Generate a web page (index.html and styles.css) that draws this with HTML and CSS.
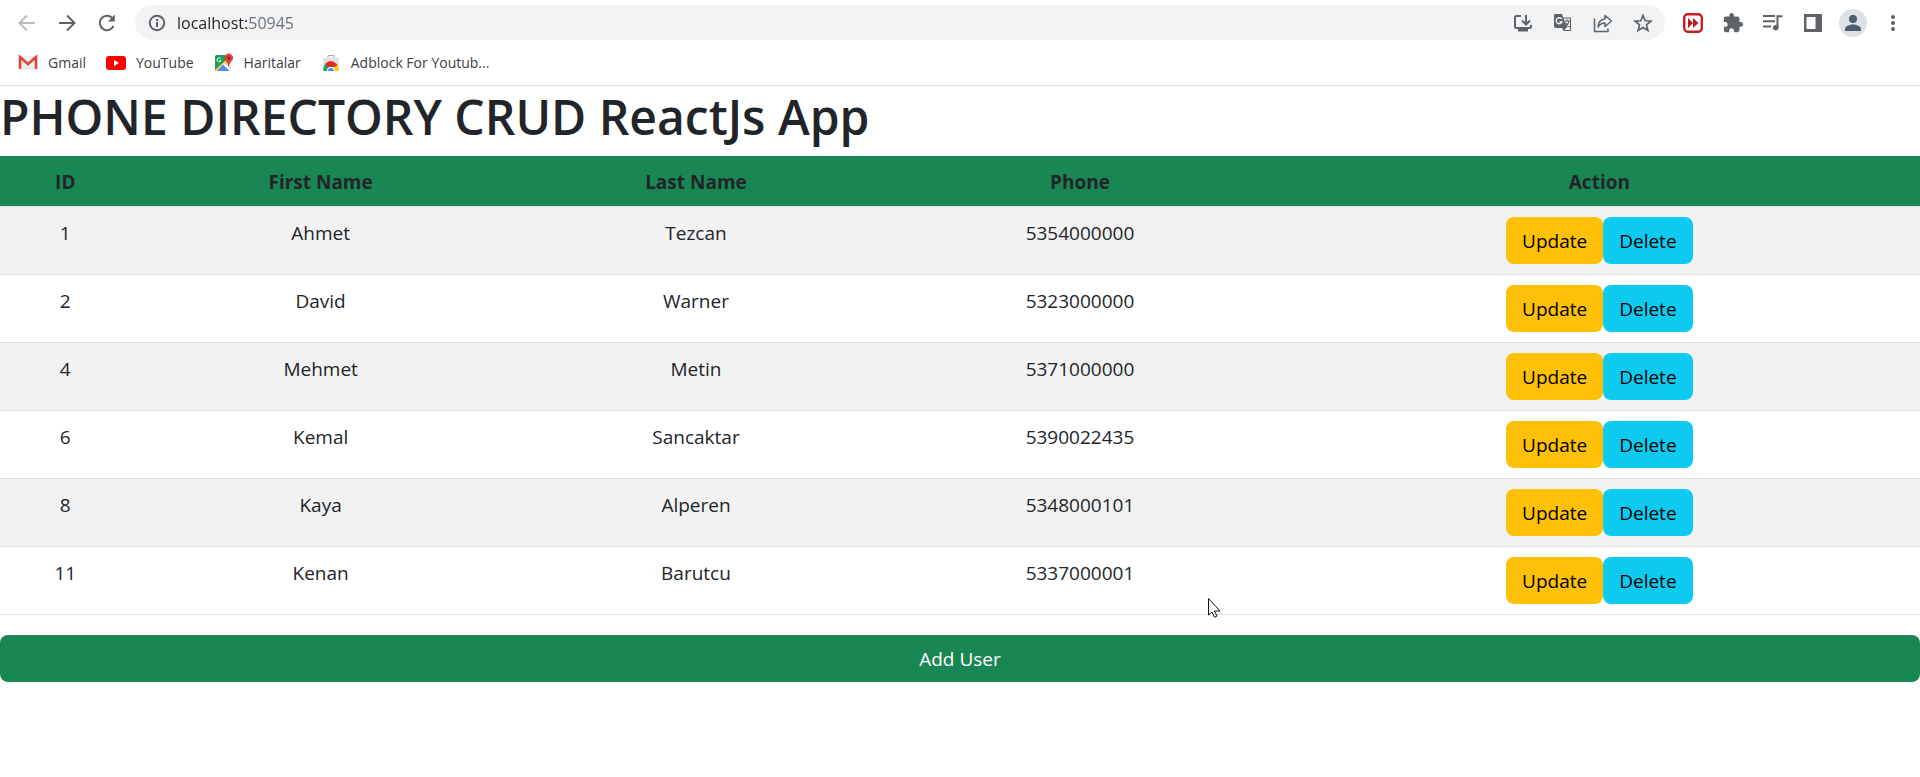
FILE: index.html
```html
<!DOCTYPE html>
<html lang="en">
<head>
<meta charset="utf-8">
<meta name="viewport" content="width=device-width, initial-scale=1">
<title>Phone Directory</title>
<link rel="stylesheet" href="styles.css">
</head>
<body>
<header class="browser">
  <div class="toolbar">
    <div class="tool-group">
      <button class="tool tool-muted" aria-label="Back"><svg width="20" height="20" viewBox="0 0 20 20" fill="none" stroke="currentColor" stroke-width="2"><path d="M18 10H3M10 2.500L2.500 10l7.500 7.500"/></svg></button>
      <button class="tool" aria-label="Forward"><svg width="20" height="20" viewBox="0 0 20 20" fill="none" stroke="currentColor" stroke-width="2"><path d="M2 10h15M10 2.500l7.500 7.500-7.500 7.500"/></svg></button>
      <button class="tool" aria-label="Reload"><svg width="20" height="20" viewBox="0 0 20 20"><path d="M16.500 13A7.200 7.200 0 1 1 15 4.800" fill="none" stroke="currentColor" stroke-width="2"/><path d="M17.800 1.500V8.500H10.800z" fill="currentColor"/></svg></button>
    </div>
    <div class="address">
      <svg width="20" height="20" viewBox="0 0 20 20" fill="none" stroke="currentColor" stroke-width="2"><circle cx="10" cy="10" r="7.200"/><path d="M10 9v5M10 6v2"/></svg>
      <input class="url" type="text" value="localhost:50945" aria-label="Address">
      <div class="tool-group">
        <button class="tool" aria-label="Install"><svg width="20" height="20" viewBox="0 0 20 20" fill="none" stroke="currentColor" stroke-width="2"><path d="M8 3H3.500Q2 3 2 4.500V13.500Q2 15 3.500 15H16.500Q18 15 18 13.500V12"/><path d="M13 2v9M9 7.500l4 4 4-4"/><path d="M5 17h10" stroke-width="3"/></svg></button>
        <button class="tool" aria-label="Translate"><svg width="20" height="20" viewBox="0 0 20 20"><path d="M9 5h8.500v12.500H11" fill="none" stroke="currentColor"/><path d="M2 1h7l5 14H3.200Q1 15 1 13V2.200Q1 1 2 1z" fill="currentColor"/><path d="M9 15h4l-2.500 3z" fill="currentColor"/><path d="M8.800 6.200A3 3 0 1 0 9 9H6.500" fill="none" stroke="#f1f3f4" stroke-width="1.400"/><path d="M11.500 8h5.500M14 6.500V8M16 8q-1 4-3.500 5.500M12.500 9.500q1 3 4 4.500" fill="none" stroke="currentColor" stroke-width="1.200"/></svg></button>
        <button class="tool" aria-label="Share"><svg width="20" height="20" viewBox="0 0 20 20" fill="none" stroke="currentColor" stroke-width="1.500"><path d="M1.500 5.500v13h13.500v-3"/><path d="M12 2.500l6.500 5.500-6.500 5.500v-3.500Q7.500 10 5 14 5.500 6.500 12 6z" stroke-linejoin="round"/></svg></button>
        <button class="tool" aria-label="Bookmark"><svg width="20" height="20" viewBox="0 0 20 20" fill="none" stroke="currentColor" stroke-width="1.700"><path d="M10 2.500l2.200 5.300 5.700.4-4.400 3.700 1.400 5.600L10 14.500l-4.900 3 1.400-5.600L2.100 8.200l5.700-.4z"/></svg></button>
      </div>
    </div>
    <div class="tool-group">
      <button class="tool" aria-label="Fast forward extension"><svg width="20" height="20" viewBox="0 0 20 20"><rect x="1.200" y="1.200" width="17.600" height="17.600" rx="3.500" fill="#fff" stroke="#c4201f" stroke-width="2.400"/><path d="M5 5l5 5-5 5zM10 5l5.500 5-5.500 5z" fill="#b8201f"/></svg></button>
      <button class="tool" aria-label="Extensions"><svg width="22" height="22" viewBox="0 0 24 24" fill="currentColor"><path d="M20.500 11H19V7c0-1.100-.9-2-2-2h-4V3.500a2.500 2.500 0 0 0-5 0V5H4c-1.100 0-2 .9-2 2v3.800h1.500c1.500 0 2.700 1.200 2.700 2.700S5 16.200 3.500 16.200H2V20c0 1.100.9 2 2 2h3.800v-1.500c0-1.500 1.200-2.700 2.700-2.700s2.700 1.200 2.700 2.700V22H17c1.100 0 2-.9 2-2v-4h1.500a2.500 2.500 0 0 0 0-5z"/></svg></button>
      <button class="tool" aria-label="Media control"><svg width="22" height="20" viewBox="0 0 22 20" fill="none" stroke="currentColor" stroke-width="2"><path d="M1 3h12M1 8.300h12M1 13.500h8"/><path d="M15.500 15V3.200H20.500"/><circle cx="13.700" cy="14.700" r="2.700" fill="currentColor" stroke="none"/></svg></button>
      <button class="tool" aria-label="Side panel"><svg width="20" height="20" viewBox="0 0 20 20"><path d="M1 1h18v18H1z" fill="currentColor"/><path d="M3.500 4h9v12h-9z" fill="#fff"/></svg></button>
      <button class="tool" aria-label="Profile"><svg width="28" height="28" viewBox="0 0 28 28"><circle cx="14" cy="14" r="14" fill="#dee1e6"/><circle cx="14" cy="10" r="4" fill="#4f5b71"/><path d="M6 22v-2c0-3 5-4.500 8-4.500s8 1.500 8 4.500v2z" fill="#4f5b71"/></svg></button>
      <button class="tool" aria-label="Menu"><svg width="20" height="20" viewBox="0 0 20 20" fill="currentColor"><circle cx="10" cy="4" r="2"/><circle cx="10" cy="10" r="2"/><circle cx="10" cy="16" r="2"/></svg></button>
    </div>
  </div>
  <nav class="bookmarks" aria-label="Bookmarks">
    <a class="bookmark" href="#gmail"><svg width="20" height="20" viewBox="0 0 20 20"><path d="M2 3h16v14H2z" fill="#eee"/><path d="M2 16V4l8 7 8-7v12" fill="none" stroke="#d9483b" stroke-width="2.600"/></svg>Gmail</a>
    <a class="bookmark" href="#youtube"><svg width="20" height="20" viewBox="0 0 20 20"><rect y="3" width="20" height="14" rx="3" fill="#f00"/><path d="M8 7l5 3-5 3z" fill="#fff"/></svg>YouTube</a>
    <a class="bookmark" href="#maps"><svg width="20" height="20" viewBox="0 0 20 20"><path d="M2.500 2H11L13 10 3 18H1V3.500Q1 2 2.500 2z" fill="#1e9e58"/><path d="M13 8l4 4v6L9 11z" fill="#dfe2e4"/><path d="M1 17L13 6l1 3L4 18H1z" fill="#ffd04b"/><path d="M9 11.500L16 18H3z" fill="#4c8df6"/><path d="M9.500 11l7.500 7" stroke="#fff" stroke-width="1.400"/><path d="M6.500 5.500A2 2 0 1 0 7 7.500H5.500" fill="none" stroke="#fff"/><path d="M14.500 14Q14 10.500 11.500 7.500A4.200 4.200 0 1 1 18 7.500Q15.500 10.500 14.500 14z" fill="#dc4437"/><circle cx="14.800" cy="5" r="1.500" fill="#7b231e"/></svg>Haritalar</a>
    <a class="bookmark" href="#adblock"><svg width="20" height="20" viewBox="0 0 20 20"><path d="M7 5V2.500h6V5" fill="none" stroke="#aaa"/><path d="M2 5h16l-1 13H3z" fill="#e2e2e2"/><path d="M2.500 18a7.500 8 0 0 1 3-8l4.500 8z" fill="#24a45a"/><path d="M10 13l7-1.500q1 3 .5 6.500H10z" fill="#fbcb09"/><path d="M4 11q6-6.500 12.500 1l-3 2H7z" fill="#df2f2c"/><path d="M6 18a4 4 0 0 1 8 0z" fill="#fff"/><path d="M7 18a3 3 0 0 1 6 0z" fill="#4c8df6"/></svg>Adblock For Youtub...</a>
  </nav>
</header>
<main>
  <h1 class="title">PHONE DIRECTORY CRUD ReactJs App</h1>
  <table class="directory">
    <colgroup><col class="col-id"><col class="col-first"><col class="col-last"><col class="col-phone"><col class="col-action"></colgroup>
    <thead>
      <tr><th scope="col">ID</th><th scope="col">First Name</th><th scope="col">Last Name</th><th scope="col">Phone</th><th scope="col">Action</th></tr>
    </thead>
    <tbody>
      <tr><td>1</td><td>Ahmet</td><td>Tezcan</td><td>5354000000</td><td class="cell-actions"><div class="actions"><button class="btn btn-update">Update</button><button class="btn btn-delete">Delete</button></div></td></tr>
      <tr><td>2</td><td>David</td><td>Warner</td><td>5323000000</td><td class="cell-actions"><div class="actions"><button class="btn btn-update">Update</button><button class="btn btn-delete">Delete</button></div></td></tr>
      <tr><td>4</td><td>Mehmet</td><td>Metin</td><td>5371000000</td><td class="cell-actions"><div class="actions"><button class="btn btn-update">Update</button><button class="btn btn-delete">Delete</button></div></td></tr>
      <tr><td>6</td><td>Kemal</td><td>Sancaktar</td><td>5390022435</td><td class="cell-actions"><div class="actions"><button class="btn btn-update">Update</button><button class="btn btn-delete">Delete</button></div></td></tr>
      <tr><td>8</td><td>Kaya</td><td>Alperen</td><td>5348000101</td><td class="cell-actions"><div class="actions"><button class="btn btn-update">Update</button><button class="btn btn-delete">Delete</button></div></td></tr>
      <tr><td>11</td><td>Kenan</td><td>Barutcu</td><td>5337000001</td><td class="cell-actions"><div class="actions"><button class="btn btn-update">Update</button><button class="btn btn-delete">Delete</button></div></td></tr>
    </tbody>
  </table>
  <button class="btn btn-add">Add User</button>
</main>
<svg class="pointer" width="13" height="20" viewBox="0 0 13 20"><path d="M.5.500v16.500l3.500-3 2.500 5.200 2.500-1.200-2.500-5h5.500z" fill="#fff" stroke="#111"/></svg>
</body>
</html>
```
FILE: styles.css
```css
*,
*::before,
*::after {
  box-sizing: border-box;
}

body {
  margin: 0;
  background: #fff;
  color: #212529;
  font-family: "Open Sans", "Noto Sans", sans-serif;
  font-size: 19px;
  line-height: 30px;
}

button,
input {
  font: inherit;
}

svg {
  display: block;
  flex: none;
}

/* Browser bar */
.browser {
  border-bottom: 1px solid #dadce0;
  color: #5f6368;
}

.toolbar {
  display: flex;
  align-items: center;
  gap: 8px;
  padding: 5px 7px;
}

.tool-group {
  display: flex;
}

.tool {
  display: flex;
  align-items: center;
  justify-content: center;
  width: 40px;
  height: 35px;
  padding: 0;
  border: 0;
  background: none;
  color: #5f6368;
}

.tool-muted {
  color: #babcbe;
}

.address {
  display: flex;
  flex: 1;
  align-items: center;
  gap: 10px;
  padding: 0 2px 0 12px;
  border-radius: 18px;
  background: #f1f3f4;
}

.url {
  flex: 1;
  min-width: 0;
  height: 30px;
  padding: 0;
  border: 0;
  outline: 0;
  background: linear-gradient(to right, #202124 72px, #6b6f73 72px);
  background-clip: text;
  -webkit-background-clip: text;
  -webkit-text-fill-color: transparent;
  font-size: 16px;
}

.bookmarks {
  display: flex;
  align-items: center;
  gap: 20px;
  height: 40px;
  padding: 0 18px 4px;
  font-size: 14px;
}

.bookmark {
  display: flex;
  align-items: center;
  gap: 10px;
  color: #3c4043;
  text-decoration: none;
}

/* Page */
.title {
  margin: 0;
  padding: 1px 0 9px;
  font-size: 48px;
  font-weight: 600;
  line-height: 60px;
}

.directory {
  width: 100%;
  margin-bottom: 20px;
  border-collapse: separate;
  border-spacing: 0;
  table-layout: fixed;
  text-align: center;
}

.col-id {
  width: 6.8%;
}

.col-first {
  width: 19.8%;
}

.col-last {
  width: 19.3%;
}

.col-phone {
  width: 20.7%;
}

.col-action {
  width: 33.4%;
}

.directory th,
.directory td {
  padding: 11px 10px 9px;
  border-bottom: 1px solid #dee2e6;
  vertical-align: top;
}

.directory th {
  background: #198754;
  font-weight: 700;
}

.directory .cell-actions {
  padding: 10px;
}

.directory tbody tr:nth-child(odd) {
  background: #f2f2f2;
}

.actions {
  display: flex;
  justify-content: center;
}

.btn {
  padding: 9px 16px 7px;
  border: 0;
  border-radius: 8px;
  line-height: 31px;
}

.btn-update {
  background: #ffc107;
  color: #000;
}

.btn-delete {
  background: #0dcaf0;
  color: #000;
}

.btn-add {
  display: block;
  width: 100%;
  background: #198754;
  color: #fff;
}

/* Mouse pointer over the page */
.pointer {
  position: absolute;
  top: 598px;
  left: 1208px;
}
```
